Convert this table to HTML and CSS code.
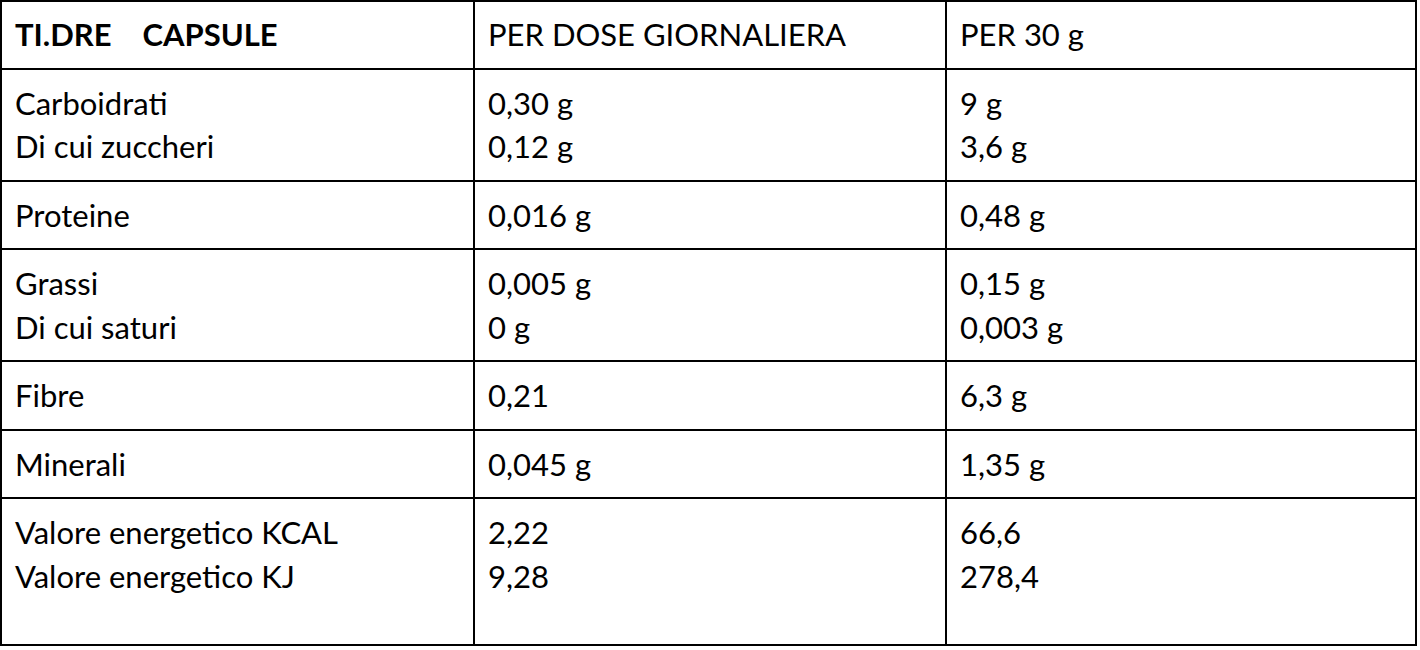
FILE: index.html
```html
<!DOCTYPE html>
<html lang="it">
<head>
<meta charset="utf-8">
<title>Valori nutrizionali</title>
<link rel="stylesheet" href="styles.css">
</head>
<body>
<table class="nutri">
  <colgroup>
    <col class="c1"><col class="c2"><col class="c3">
  </colgroup>
  <tr class="head">
    <td><b>TI.DRE</b><span class="gap"></span><b>CAPSULE</b></td>
    <td>PER DOSE GIORNALIERA</td>
    <td>PER 30 g</td>
  </tr>
  <tr>
    <td>Carboidrati<br>Di cui zuccheri</td>
    <td>0,30 g<br>0,12 g</td>
    <td>9 g<br>3,6 g</td>
  </tr>
  <tr>
    <td>Proteine</td>
    <td>0,016 g</td>
    <td>0,48 g</td>
  </tr>
  <tr>
    <td>Grassi<br>Di cui saturi</td>
    <td>0,005 g<br>0 g</td>
    <td>0,15 g<br>0,003 g</td>
  </tr>
  <tr>
    <td>Fibre</td>
    <td>0,21</td>
    <td>6,3 g</td>
  </tr>
  <tr>
    <td>Minerali</td>
    <td>0,045 g</td>
    <td>1,35 g</td>
  </tr>
  <tr class="last">
    <td>Valore energetico KCAL<br>Valore energetico KJ</td>
    <td>2,22<br>9,28</td>
    <td>66,6<br>278,4</td>
  </tr>
</table>
</body>
</html>
```

FILE: styles.css
```css
html, body {
  margin: 0;
  padding: 0;
  background: #ffffff;
}

.nutri {
  border-collapse: collapse;
  table-layout: fixed;
  width: 1417px;
  font-family: Lato, "Open Sans", sans-serif;
  font-size: 31px;
  line-height: 43.5px;
  color: #000;
}

.c1 { width: 473px; }
.c2 { width: 472px; }
.c3 { width: 470px; }

.nutri td {
  border: 2px solid #000;
  padding: 12px 12px 11px 13px;
  vertical-align: top;
  white-space: nowrap;
}

.head td {
  padding-top: 11px;
  padding-bottom: 11px;
}

.head b {
  font-weight: 700;
}

.gap {
  display: inline-block;
  width: 31px;
}

.last td {
  height: 122px;
}
```
